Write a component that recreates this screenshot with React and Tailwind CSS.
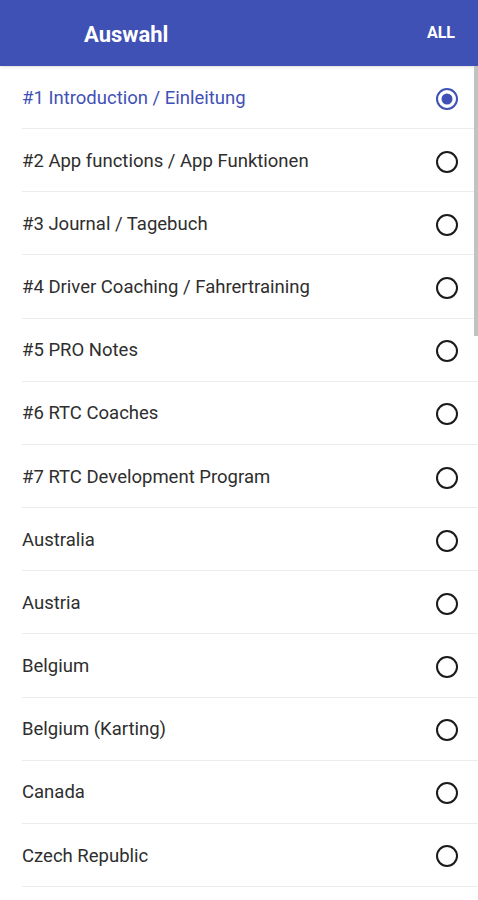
import React, { useState } from 'react';

const items = [
    '#1 Introduction / Einleitung',
    '#2 App functions / App Funktionen',
    '#3 Journal / Tagebuch',
    '#4 Driver Coaching / Fahrertraining',
    '#5 PRO Notes',
    '#6 RTC Coaches',
    '#7 RTC Development Program',
    'Australia',
    'Austria',
    'Belgium',
    'Belgium (Karting)',
    'Canada',
    'Czech Republic',
];

const Radio = ({ checked }) => (
    <svg width="26" height="26" viewBox="0 0 26 26">
        <circle cx="13" cy="13" r="10" fill="none" stroke={checked ? '#3f51b5' : '#1a1a1a'} strokeWidth="2" />
        {checked && <circle cx="13" cy="13" r="5.5" fill="#3f51b5" />}
    </svg>
);

const App = () => {
    const [selected, setSelected] = useState(0);

    return (
        <div className="relative w-[478px] h-[900px] overflow-hidden bg-white font-['Roboto',sans-serif]">
            <header className="h-[66px] bg-[#3f51b5] flex items-center justify-between shadow-sm">
                <h1 className="ml-[84px] text-[22px] font-bold text-white leading-none mt-[3px]">Auswahl</h1>
                <button className="mr-[23px] text-[16px] font-bold text-white leading-none">ALL</button>
            </header>
            <ul>
                {items.map((item, i) => (
                    <li
                        key={item}
                        onClick={() => setSelected(i)}
                        className="h-[63.17px] pl-[22px] flex"
                    >
                        <div className="flex-1 flex items-center justify-between border-b border-[#ececec] pr-[18px] pt-[3px]">
                            <span className={`text-[18.5px] ${i === selected ? 'text-[#3f51b5]' : 'text-[#2e2e2e]'}`}>
                                {item}
                            </span>
                            <Radio checked={i === selected} />
                        </div>
                    </li>
                ))}
            </ul>
            <div className="absolute right-0 top-[66px] w-[4px] h-[270px] bg-[#c2c2c2]" />
        </div>
    );
};

export default App;
